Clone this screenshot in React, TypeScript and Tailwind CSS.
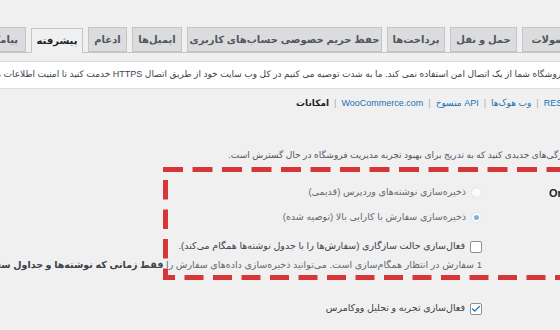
import { Check } from 'lucide-react';

const tabs = [
  { label: 'محصولات', w: 'w-[66px]' },
  { label: 'حمل و نقل', w: 'w-[67px]' },
  { label: 'پرداخت‌ها', w: 'w-[58px]' },
  { label: 'حفظ حریم خصوصی حساب‌های کاربری', w: 'w-[195px]' },
  { label: 'ایمیل‌ها', w: 'w-[50px]' },
  { label: 'ادغام', w: 'w-[39px]' },
  { label: 'پیشرفته', w: 'w-[52px]', active: true },
  { label: 'پیامک', w: 'w-[44px]' },
];

const links = ['REST API', 'وب هوک‌ها', 'API منسوخ', 'WooCommerce.com'];

function Radio({ checked }: { checked?: boolean }) {
  return (
    <span className="w-[11px] h-[11px] shrink-0 rounded-full border border-[#e4e4e6] bg-white/70 flex items-center justify-center">
      {checked && <span className="w-[5px] h-[5px] rounded-full bg-[#7fb0e0]" />}
    </span>
  );
}

function Box({ checked }: { checked?: boolean }) {
  return (
    <span className="w-[12px] h-[12px] shrink-0 rounded-[2px] border border-[#8c8f94] bg-white flex items-center justify-center">
      {checked && <Check className="w-[10px] h-[10px] text-[#2271b1]" strokeWidth={3} />}
    </span>
  );
}

export default function App() {
  return (
    <div className="w-[560px] h-[330px] overflow-hidden bg-[#f0f0f1] relative font-['Liberation_Sans','DejaVu_Sans',sans-serif] text-[#3c434a]">
      <div dir="rtl" className="w-[600px] pt-[28px]">
        {/* tabs */}
        <div className="flex items-end gap-[5px] pr-[12px] border-b border-[#c3c4c7] h-[25px]">
          {tabs.map(t => (
            <div
              key={t.label}
              className={`${t.w} shrink-0 h-[25px] flex items-center justify-center whitespace-nowrap text-[10px] font-bold border border-[#c3c4c7] ${
                t.active ? 'bg-[#f0f0f1] border-b-[#f0f0f1] text-[#1d2327] -mb-px' : 'bg-[#dcdcde] text-[#50575e]'
              }`}
            >
              {t.label}
            </div>
          ))}
        </div>

        {/* notice */}
        <div className="mt-[8px] h-[28px] bg-white border-y border-[#dcdcde] flex items-center pr-[34px] whitespace-nowrap text-[9px] text-[#3c434a]">
          فروشگاه شما از یک اتصال امن استفاده نمی کند. ما به شدت توصیه می کنیم در کل وب سایت خود از طریق اتصال HTTPS خدمت کنید تا امنیت اطلاعات مشتریان شما حفظ شود.
        </div>

        {/* sub links */}
        <div className="mt-[8px] h-[14px] flex items-center gap-[5px] pr-[16px] whitespace-nowrap text-[9px]">
          {links.map(l => (
            <span key={l} className="flex items-center gap-[5px]">
              <span className="text-[#2271b1]">{l}</span>
              <span className="text-[#a7aaad]">|</span>
            </span>
          ))}
          <span className="font-bold text-[#1d2327]">امکانات</span>
        </div>

        {/* intro */}
        <p className="mt-[38px] pr-[30px] whitespace-nowrap text-[9px] text-[#50575e]">
          ویژگی‌های جدیدی کنید که به تدریج برای بهبود تجربه مدیریت فروشگاه در حال گسترش است.
        </p>

        {/* settings */}
        <div className="mt-[20px] flex">
          <div dir="ltr" className="w-[51px] shrink-0 text-left whitespace-nowrap text-[11px] font-bold text-[#1d2327] leading-[20px]">
            Order data storage
          </div>
          <div className="pr-[67px] flex flex-col text-[9.5px]">
            <label className="h-[20px] flex items-center gap-[5px] text-[#646970] whitespace-nowrap">
              <Radio />
              ذخیره‌سازی نوشته‌های وردپرس (قدیمی)
            </label>
            <label className="mt-[5px] h-[20px] flex items-center gap-[5px] text-[#646970] whitespace-nowrap">
              <Radio checked />
              ذخیره‌سازی سفارش با کارایی بالا (توصیه شده)
            </label>
            <label className="mt-[9px] h-[20px] flex items-center gap-[5px] whitespace-nowrap">
              <Box />
              فعال‌سازی حالت سازگاری (سفارش‌ها را با جدول نوشته‌ها همگام می‌کند).
            </label>
            <p className="mt-[-1px] whitespace-nowrap text-[#646970] leading-[18px]">
              1 سفارش در انتظار همگام‌سازی است. می‌توانید ذخیره‌سازی داده‌های سفارش را{' '}
              <b className="text-[#3c434a]">فقط زمانی که نوشته‌ها و جداول سفارش همگام باشند</b> تغییر دهید.
            </p>
            <label className="mt-[25px] h-[20px] flex items-center gap-[5px] whitespace-nowrap">
              <Box checked />
              فعال‌سازی تجربه و تحلیل ووکامرس
            </label>
          </div>
        </div>
      </div>

      {/* red dashed highlight */}
      <svg className="absolute left-0 top-0 pointer-events-none" width="560" height="330">
        <g stroke="#d63638" strokeWidth="5" fill="none">
          <line x1="163" y1="169.5" x2="600" y2="169.5" strokeDasharray="20 9.5" />
          <line x1="165.5" y1="180" x2="165.5" y2="280" strokeDasharray="19.5 10" />
          <line x1="163" y1="277.5" x2="600" y2="277.5" strokeDasharray="19 9.5" strokeDashoffset="7" />
        </g>
      </svg>
    </div>
  );
}
